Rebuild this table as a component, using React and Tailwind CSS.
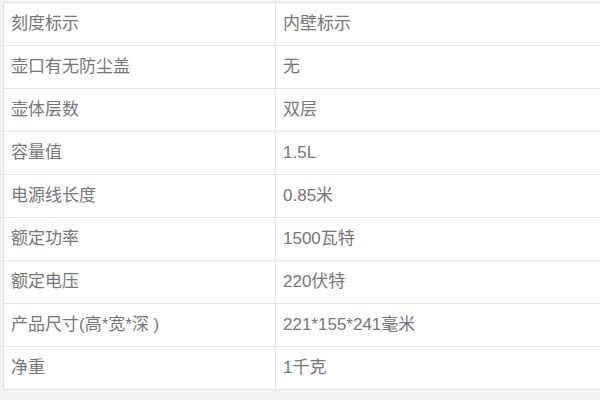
const specs = [
  ["刻度标示", "内壁标示"],
  ["壶口有无防尘盖", "无"],
  ["壶体层数", "双层"],
  ["容量值", "1.5L"],
  ["电源线长度", "0.85米"],
  ["额定功率", "1500瓦特"],
  ["额定电压", "220伏特"],
  ["产品尺寸(高*宽*深 )", "221*155*241毫米"],
  ["净重", "1千克"],
];

export default function App() {
  return (
    <div
      className="w-[600px] h-[400px] overflow-hidden bg-[#f2f2f2] pt-[2px] pl-[3px]"
      style={{ fontFamily: '"Liberation Sans", "Noto Sans CJK SC", sans-serif' }}
    >
      <div className="w-[640px] bg-white border-t border-l border-[#e3e3e3]">
        {specs.map(([name, value]) => (
          <div key={name} className="flex h-[43px] border-b border-[#e3e3e3] text-[17px] text-[#777]">
            <div className="w-[272px] shrink-0 flex items-center pl-[7px] border-r border-[#e3e3e3]">
              {name}
            </div>
            <div className="flex-1 flex items-center pl-[7px]">{value}</div>
          </div>
        ))}
      </div>
    </div>
  );
}
